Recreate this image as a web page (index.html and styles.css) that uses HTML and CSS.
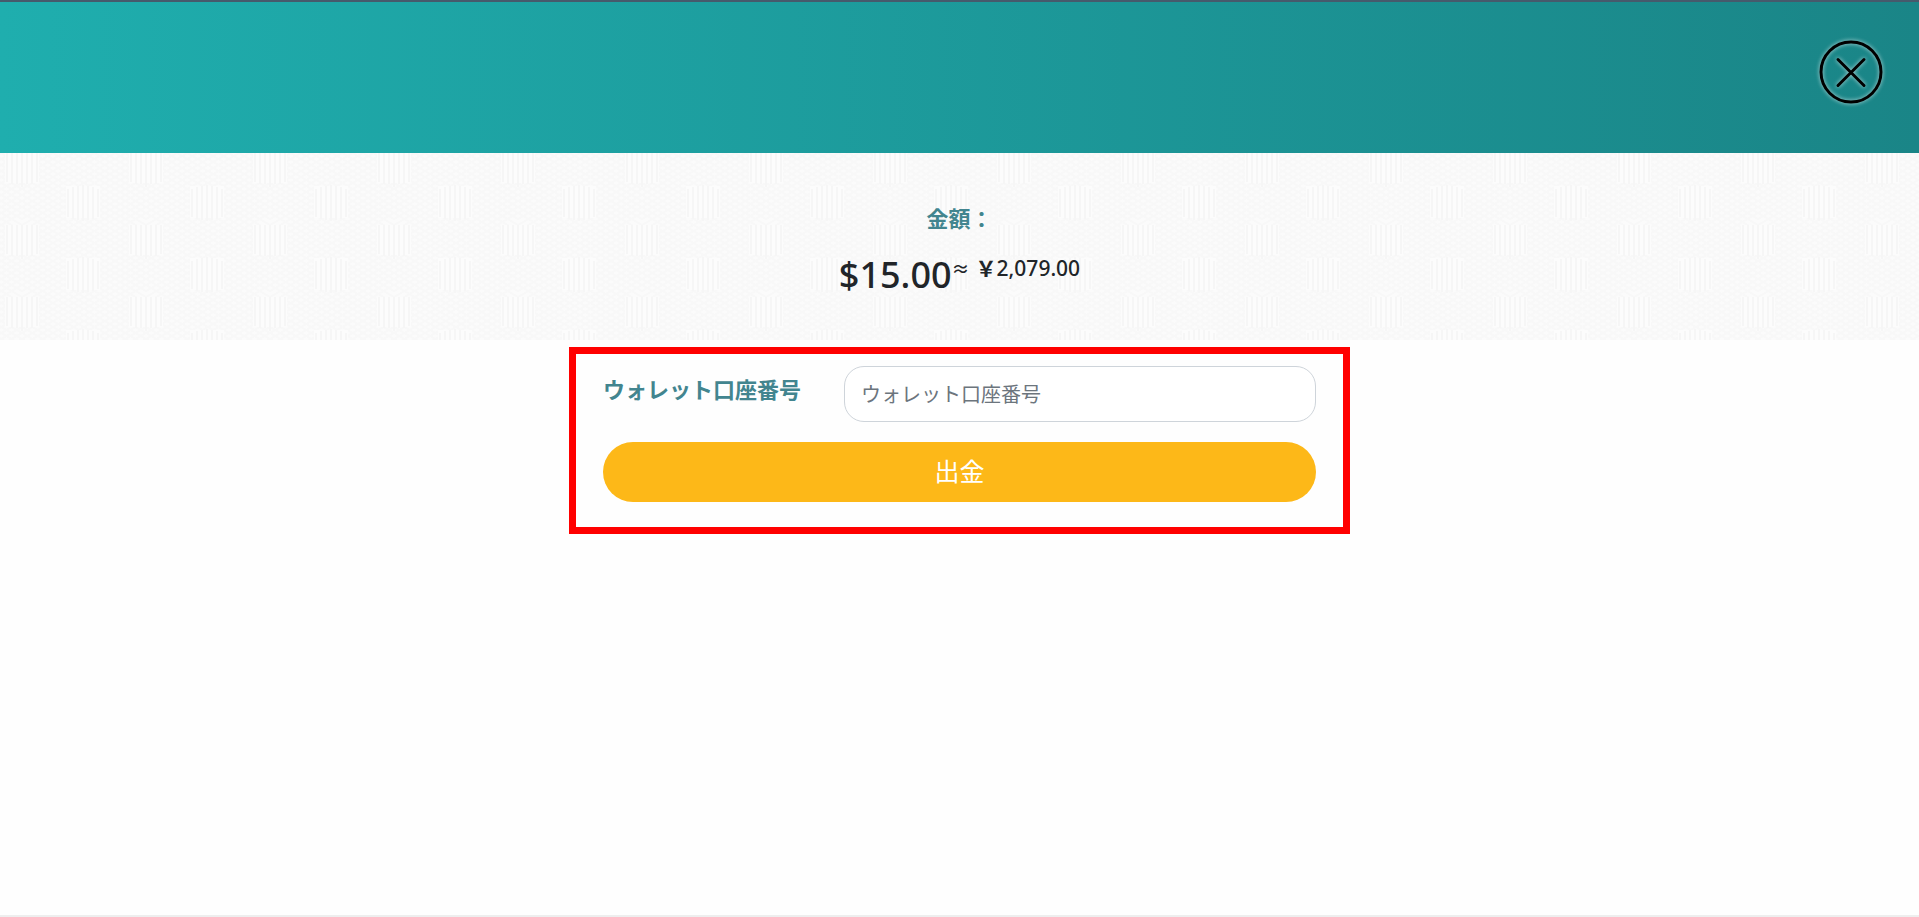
FILE: index.html
```html
<!DOCTYPE html>
<html lang="ja">

<head>
    <meta charset="UTF-8">
    <meta name="viewport" content="width=device-width, initial-scale=1">
    <title>出金</title>
    <link rel="stylesheet" href="styles.css">
</head>

<body>
    <header class="header">
        <button type="button" class="close" aria-label="閉じる">
            <svg viewBox="0 0 64 64" fill="none" stroke="#000" stroke-width="3" stroke-linecap="round">
                <circle cx="32" cy="32" r="30" />
                <path d="M19 19.5 45 45.5M45 19.5 19 45.5" />
            </svg>
        </button>
    </header>

    <main>
        <section class="amount">
            <h2 class="amount-title">金額：</h2>
            <p class="amount-value">$15.00<span class="amount-local"><span class="approx">≈</span><span class="yen">￥</span>2,079.00</span></p>
        </section>

        <form class="formulario">
            <div class="campo">
                <label for="wallet">ウォレット口座番号</label>
                <input type="text" id="wallet" name="wallet" placeholder="ウォレット口座番号">
            </div>
            <button type="submit" class="submit">出金</button>
        </form>
    </main>
</body>

</html>
```
FILE: styles.css
```css
* {
    box-sizing: border-box;
}

body {
    margin: 0;
    min-height: 100vh;
    background-color: #fefefe;
    border-bottom: 2px solid #eeeeee;
    color: #212529;
    font-family: "Noto Sans", "Noto Sans CJK JP", sans-serif;
}

.header {
    display: flex;
    justify-content: flex-end;
    padding: 38px 36px 49px;
    border-top: 2px solid #465a6c;
    background: linear-gradient(90deg, #1faeae, #1a8587) padding-box;
}

.close {
    width: 64px;
    height: 64px;
    padding: 0;
    border: none;
    border-radius: 50%;
    background: none;
    cursor: pointer;
}

.close svg {
    display: block;
    filter: drop-shadow(0 0 2px rgba(255, 255, 255, 0.7));
}

.amount {
    padding: 49px 20px 40px;
    text-align: center;
    background-color: #fbfbfb;
    /* woven pattern: vertical bars between slanted lines */
    background-image: url("data:image/svg+xml,%3Csvg xmlns='http://www.w3.org/2000/svg' width='124' height='72'%3E%3Cdefs%3E%3Cpath id='a' d='M-40 24 22 -12 84 24 146 -12M-40 0 22 36 84 0 146 36'/%3E%3C/defs%3E%3Cg fill='none' stroke='%23f8f8f8' stroke-width='2'%3E%3Cuse href='%23a' y='-24'/%3E%3Cuse href='%23a' y='-18'/%3E%3Cuse href='%23a' y='-12'/%3E%3Cuse href='%23a' y='-6'/%3E%3Cuse href='%23a'/%3E%3Cuse href='%23a' y='6'/%3E%3Cuse href='%23a' y='12'/%3E%3Cuse href='%23a' y='18'/%3E%3Cuse href='%23a' y='24'/%3E%3Cuse href='%23a' y='30'/%3E%3Cuse href='%23a' y='36'/%3E%3Cuse href='%23a' y='42'/%3E%3Cuse href='%23a' y='48'/%3E%3Cuse href='%23a' y='54'/%3E%3Cuse href='%23a' y='60'/%3E%3Cuse href='%23a' y='66'/%3E%3Cuse href='%23a' y='72'/%3E%3C/g%3E%3Cg fill='%23fcfcfc'%3E%3Cpath d='M5 0H39V30H5zM66 33H100V65H66z'/%3E%3C/g%3E%3Cg stroke='%23f6f6f6' stroke-width='2'%3E%3Cpath d='M7 0V29M12 0V31M17 0V31M22 0V34M27 0V31M32 0V31M37 0V29M68 36V64M73 34V66M78 33V67M83 32V68M88 33V67M93 34V66M98 36V64'/%3E%3C/g%3E%3C/svg%3E");
}

.amount-title {
    margin: 0;
    color: #42858f;
    font-size: 22px;
    line-height: 32px;
}

.amount-value {
    margin: 16px 0 0;
    font-size: 36px;
    font-weight: 500;
    line-height: 50px;
}

.amount-local {
    font-size: 21px;
    line-height: 24px;
    vertical-align: 12px;
}

.approx {
    margin-right: 6px;
    font-size: 18px;
}

.yen {
    font-weight: 700;
}

.formulario {
    width: 100%;
    max-width: 781px;
    margin: 7px auto 0;
    padding: 12px 27px 25px;
    border: 7px solid #ff0000;
}

.campo {
    display: flex;
    flex-wrap: wrap;
}

.campo label {
    flex: 0 1 241px;
    padding-top: 7px;
    color: #42858f;
    font-size: 22px;
    font-weight: 700;
    line-height: 32px;
}

.campo input {
    flex: 1;
    min-width: 240px;
    height: 56px;
    padding: 0 16px;
    border: 1px solid #ced4da;
    border-radius: 20px;
    background-color: #ffffff;
    color: #495057;
    font-family: inherit;
    font-size: 20px;
}

.campo input::placeholder {
    color: #6c757d;
    opacity: 1;
}

.submit {
    display: block;
    width: 100%;
    height: 60px;
    margin-top: 20px;
    padding: 0 0 4px;
    border: none;
    border-radius: 30px;
    background-color: #fdb818;
    color: #ffffff;
    font-family: inherit;
    font-size: 25px;
    cursor: pointer;
}
```
